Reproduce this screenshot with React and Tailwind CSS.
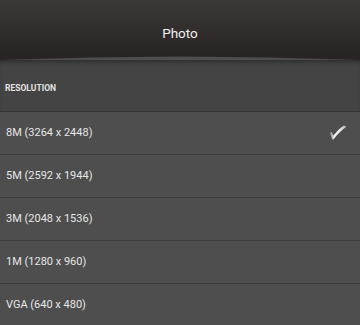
const rows = [
  "8M (3264 x 2448)",
  "5M (2592 x 1944)",
  "3M (2048 x 1536)",
  "1M (1280 x 960)",
  "VGA (640 x 480)",
];

function Check() {
  return (
    <svg width="18" height="15" viewBox="0 0 18 15" className="shrink-0 mt-[-1px]">
      <defs>
        <linearGradient id="ck" x1="0" y1="0.5" x2="1" y2="0.5">
          <stop offset="0" stopColor="#6a6a6a" />
          <stop offset="0.3" stopColor="#f6f6f6" />
          <stop offset="0.7" stopColor="#e0e0e0" />
          <stop offset="1" stopColor="#a8a8a8" />
        </linearGradient>
      </defs>
      <path
        d="M0.5 7.5 L2.5 7 L4.5 10.5 C8 6 11 3 15 0.5 L17.5 1.8 C13 5 8.5 9 4.5 14.5 L3.2 14.5 Z"
        fill="url(#ck)"
      />
    </svg>
  );
}

export default function App() {
  return (
    <div
      className="w-[360px] h-[325px] overflow-hidden bg-[#4e4e4e]"
      style={{ fontFamily: "Roboto, 'Noto Sans', sans-serif" }}
    >
      <div className="relative h-[60px]">
        <div className="flex h-[55px] items-center justify-center bg-gradient-to-b from-[#3d3938] to-[#282423] pt-[11px] text-[13.5px] text-[#f0f0f0]">
          Photo
        </div>
        <svg
          width="360"
          height="6"
          viewBox="0 0 360 6"
          preserveAspectRatio="none"
          className="block"
        >
          <path d="M0 0 H360 V5 Q180 -2 0 5 Z" fill="#282423" />
        </svg>
      </div>
      <div className="flex h-[52px] items-center bg-[#444444] pl-[5px] pt-[5px] text-[8.5px] font-bold text-[#e2e2e2] shadow-[inset_0_4px_4px_-2px_rgba(0,0,0,0.35)] border-b border-[#353535]">
        RESOLUTION
      </div>
      {rows.map((r, i) => (
        <div
          key={r}
          className="flex h-[43px] items-center justify-between border-b border-[#3b3b3b] pl-[6px] pr-[13px] text-[11px] text-[#e6e6e6]"
        >
          <span>{r}</span>
          {i === 0 && <Check />}
        </div>
      ))}
    </div>
  );
}
